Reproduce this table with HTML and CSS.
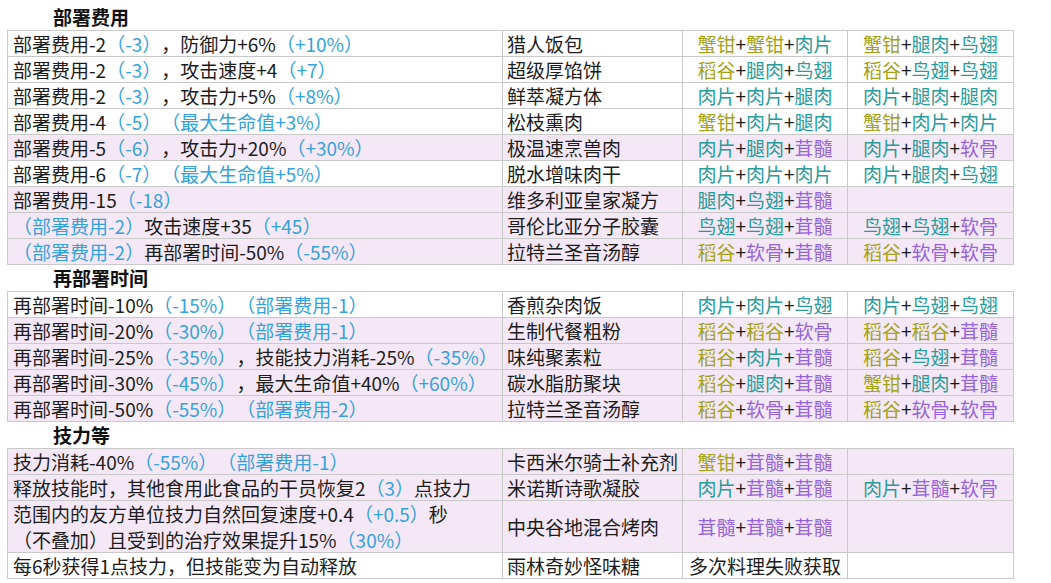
FILE: index.html
```html
<!DOCTYPE html>
<html lang="zh-CN">
<head>
<meta charset="utf-8">
<title>料理效果</title>
<link rel="stylesheet" href="styles.css">
</head>
<body>
<div class="page">
  <div class="sec-title">部署费用</div>
  <table class="grid">
    <colgroup><col class="c1"><col class="c2"><col class="c3"><col class="c4"></colgroup>
    <tr><td class="eff">部署费用-2<span class="b">（-3）</span>，防御力+6%<span class="b">（+10%）</span></td><td class="name">猎人饭包</td><td class="ing"><span class="o">蟹钳</span>+<span class="o">蟹钳</span>+<span class="t">肉片</span></td><td class="ing"><span class="o">蟹钳</span>+<span class="t">腿肉</span>+<span class="t">鸟翅</span></td></tr>
    <tr><td class="eff">部署费用-2<span class="b">（-3）</span>，攻击速度+4<span class="b">（+7）</span></td><td class="name">超级厚馅饼</td><td class="ing"><span class="o">稻谷</span>+<span class="t">腿肉</span>+<span class="t">鸟翅</span></td><td class="ing"><span class="o">稻谷</span>+<span class="t">鸟翅</span>+<span class="t">鸟翅</span></td></tr>
    <tr><td class="eff">部署费用-2<span class="b">（-3）</span>，攻击力+5%<span class="b">（+8%）</span></td><td class="name">鲜萃凝方体</td><td class="ing"><span class="t">肉片</span>+<span class="t">肉片</span>+<span class="t">腿肉</span></td><td class="ing"><span class="t">肉片</span>+<span class="t">腿肉</span>+<span class="t">腿肉</span></td></tr>
    <tr><td class="eff">部署费用-4<span class="b">（-5）（最大生命值+3%）</span></td><td class="name">松枝熏肉</td><td class="ing"><span class="o">蟹钳</span>+<span class="t">肉片</span>+<span class="t">腿肉</span></td><td class="ing"><span class="o">蟹钳</span>+<span class="t">肉片</span>+<span class="t">肉片</span></td></tr>
    <tr class="alt"><td class="eff">部署费用-5<span class="b">（-6）</span>，攻击力+20%<span class="b">（+30%）</span></td><td class="name">极温速烹兽肉</td><td class="ing"><span class="t">肉片</span>+<span class="t">腿肉</span>+<span class="p">茸髓</span></td><td class="ing"><span class="t">肉片</span>+<span class="t">腿肉</span>+<span class="p">软骨</span></td></tr>
    <tr><td class="eff">部署费用-6<span class="b">（-7）（最大生命值+5%）</span></td><td class="name">脱水增味肉干</td><td class="ing"><span class="t">肉片</span>+<span class="t">肉片</span>+<span class="t">肉片</span></td><td class="ing"><span class="t">肉片</span>+<span class="t">腿肉</span>+<span class="t">鸟翅</span></td></tr>
    <tr class="alt"><td class="eff">部署费用-15<span class="b">（-18）</span></td><td class="name">维多利亚皇家凝方</td><td class="ing"><span class="t">腿肉</span>+<span class="t">鸟翅</span>+<span class="p">茸髓</span></td><td class="ing"></td></tr>
    <tr class="alt"><td class="eff"><span class="b">（部署费用-2）</span>攻击速度+35<span class="b">（+45）</span></td><td class="name">哥伦比亚分子胶囊</td><td class="ing"><span class="t">鸟翅</span>+<span class="t">鸟翅</span>+<span class="p">茸髓</span></td><td class="ing"><span class="t">鸟翅</span>+<span class="t">鸟翅</span>+<span class="p">软骨</span></td></tr>
    <tr class="alt"><td class="eff"><span class="b">（部署费用-2）</span>再部署时间-50%<span class="b">（-55%）</span></td><td class="name">拉特兰圣音汤醇</td><td class="ing"><span class="o">稻谷</span>+<span class="p">软骨</span>+<span class="p">茸髓</span></td><td class="ing"><span class="o">稻谷</span>+<span class="p">软骨</span>+<span class="p">软骨</span></td></tr>
  </table>

  <div class="sec-title">再部署时间</div>
  <table class="grid">
    <colgroup><col class="c1"><col class="c2"><col class="c3"><col class="c4"></colgroup>
    <tr><td class="eff">再部署时间-10%<span class="b">（-15%）（部署费用-1）</span></td><td class="name">香煎杂肉饭</td><td class="ing"><span class="t">肉片</span>+<span class="t">肉片</span>+<span class="t">鸟翅</span></td><td class="ing"><span class="t">肉片</span>+<span class="t">鸟翅</span>+<span class="t">鸟翅</span></td></tr>
    <tr class="alt"><td class="eff">再部署时间-20%<span class="b">（-30%）（部署费用-1）</span></td><td class="name">生制代餐粗粉</td><td class="ing"><span class="o">稻谷</span>+<span class="o">稻谷</span>+<span class="p">软骨</span></td><td class="ing"><span class="o">稻谷</span>+<span class="o">稻谷</span>+<span class="p">茸髓</span></td></tr>
    <tr class="alt"><td class="eff">再部署时间-25%<span class="b">（-35%）</span>，技能技力消耗-25%<span class="b">（-35%）</span></td><td class="name">味纯聚素粒</td><td class="ing"><span class="o">稻谷</span>+<span class="t">肉片</span>+<span class="p">茸髓</span></td><td class="ing"><span class="o">稻谷</span>+<span class="t">鸟翅</span>+<span class="p">茸髓</span></td></tr>
    <tr class="alt"><td class="eff">再部署时间-30%<span class="b">（-45%）</span>，最大生命值+40%<span class="b">（+60%）</span></td><td class="name">碳水脂肪聚块</td><td class="ing"><span class="o">稻谷</span>+<span class="t">腿肉</span>+<span class="p">茸髓</span></td><td class="ing"><span class="o">蟹钳</span>+<span class="t">腿肉</span>+<span class="p">茸髓</span></td></tr>
    <tr class="alt"><td class="eff">再部署时间-50%<span class="b">（-55%）（部署费用-2）</span></td><td class="name">拉特兰圣音汤醇</td><td class="ing"><span class="o">稻谷</span>+<span class="p">软骨</span>+<span class="p">茸髓</span></td><td class="ing"><span class="o">稻谷</span>+<span class="p">软骨</span>+<span class="p">软骨</span></td></tr>
  </table>

  <div class="sec-title">技力等</div>
  <table class="grid">
    <colgroup><col class="c1"><col class="c2"><col class="c3"><col class="c4"></colgroup>
    <tr class="alt"><td class="eff">技力消耗-40%<span class="b">（-55%）（部署费用-1）</span></td><td class="name">卡西米尔骑士补充剂</td><td class="ing"><span class="o">蟹钳</span>+<span class="p">茸髓</span>+<span class="p">茸髓</span></td><td class="ing"></td></tr>
    <tr class="alt"><td class="eff">释放技能时，其他食用此食品的干员恢复2<span class="b">（3）</span>点技力</td><td class="name">米诺斯诗歌凝胶</td><td class="ing"><span class="t">肉片</span>+<span class="p">茸髓</span>+<span class="p">茸髓</span></td><td class="ing"><span class="t">肉片</span>+<span class="p">茸髓</span>+<span class="p">软骨</span></td></tr>
    <tr class="alt tall"><td class="eff">范围内的友方单位技力自然回复速度+0.4<span class="b">（+0.5）</span>秒<br>（不叠加）且受到的治疗效果提升15%<span class="b">（30%）</span></td><td class="name">中央谷地混合烤肉</td><td class="ing"><span class="p">茸髓</span>+<span class="p">茸髓</span>+<span class="p">茸髓</span></td><td class="ing"></td></tr>
    <tr><td class="eff">每6秒获得1点技力，但技能变为自动释放</td><td class="name">雨林奇妙怪味糖</td><td class="ing">多次料理失败获取</td><td class="ing"></td></tr>
  </table>
</div>
</body>
</html>
```

FILE: styles.css
```css
html, body {
  margin: 0;
  padding: 0;
  background: #ffffff;
}

.page {
  padding: 4px 0 0 7px;
  font-family: "Noto Sans CJK SC", "Microsoft YaHei", sans-serif;
  font-size: 19px;
  color: #1c1c1c;
  text-spacing-trim: space-all;
}

.sec-title {
  height: 26px;
  line-height: 26px;
  padding-left: 46px;
  font-weight: bold;
  font-size: 19px;
  color: #111;
}

.grid {
  border-collapse: collapse;
  table-layout: fixed;
  width: 1006px;
}

.c1 { width: 495px; }
.c2 { width: 180px; }
.c3 { width: 165px; }
.c4 { width: 166px; }

.grid td {
  border: 1px solid #c9c9c9;
  padding: 0;
  line-height: 25px;
  height: 25px;
  white-space: nowrap;
  overflow: hidden;
  vertical-align: middle;
}

.grid .alt td {
  background: #f5e8f6;
}

.grid .tall td {
  line-height: 25.5px;
}

.eff { padding-left: 5px !important; }
.name { padding-left: 4px !important; }
.ing { text-align: center; }

.b { color: #35a2dc; }
.o { color: #a3a319; }
.t { color: #2a9b9b; }
.p { color: #9565dd; }
```
